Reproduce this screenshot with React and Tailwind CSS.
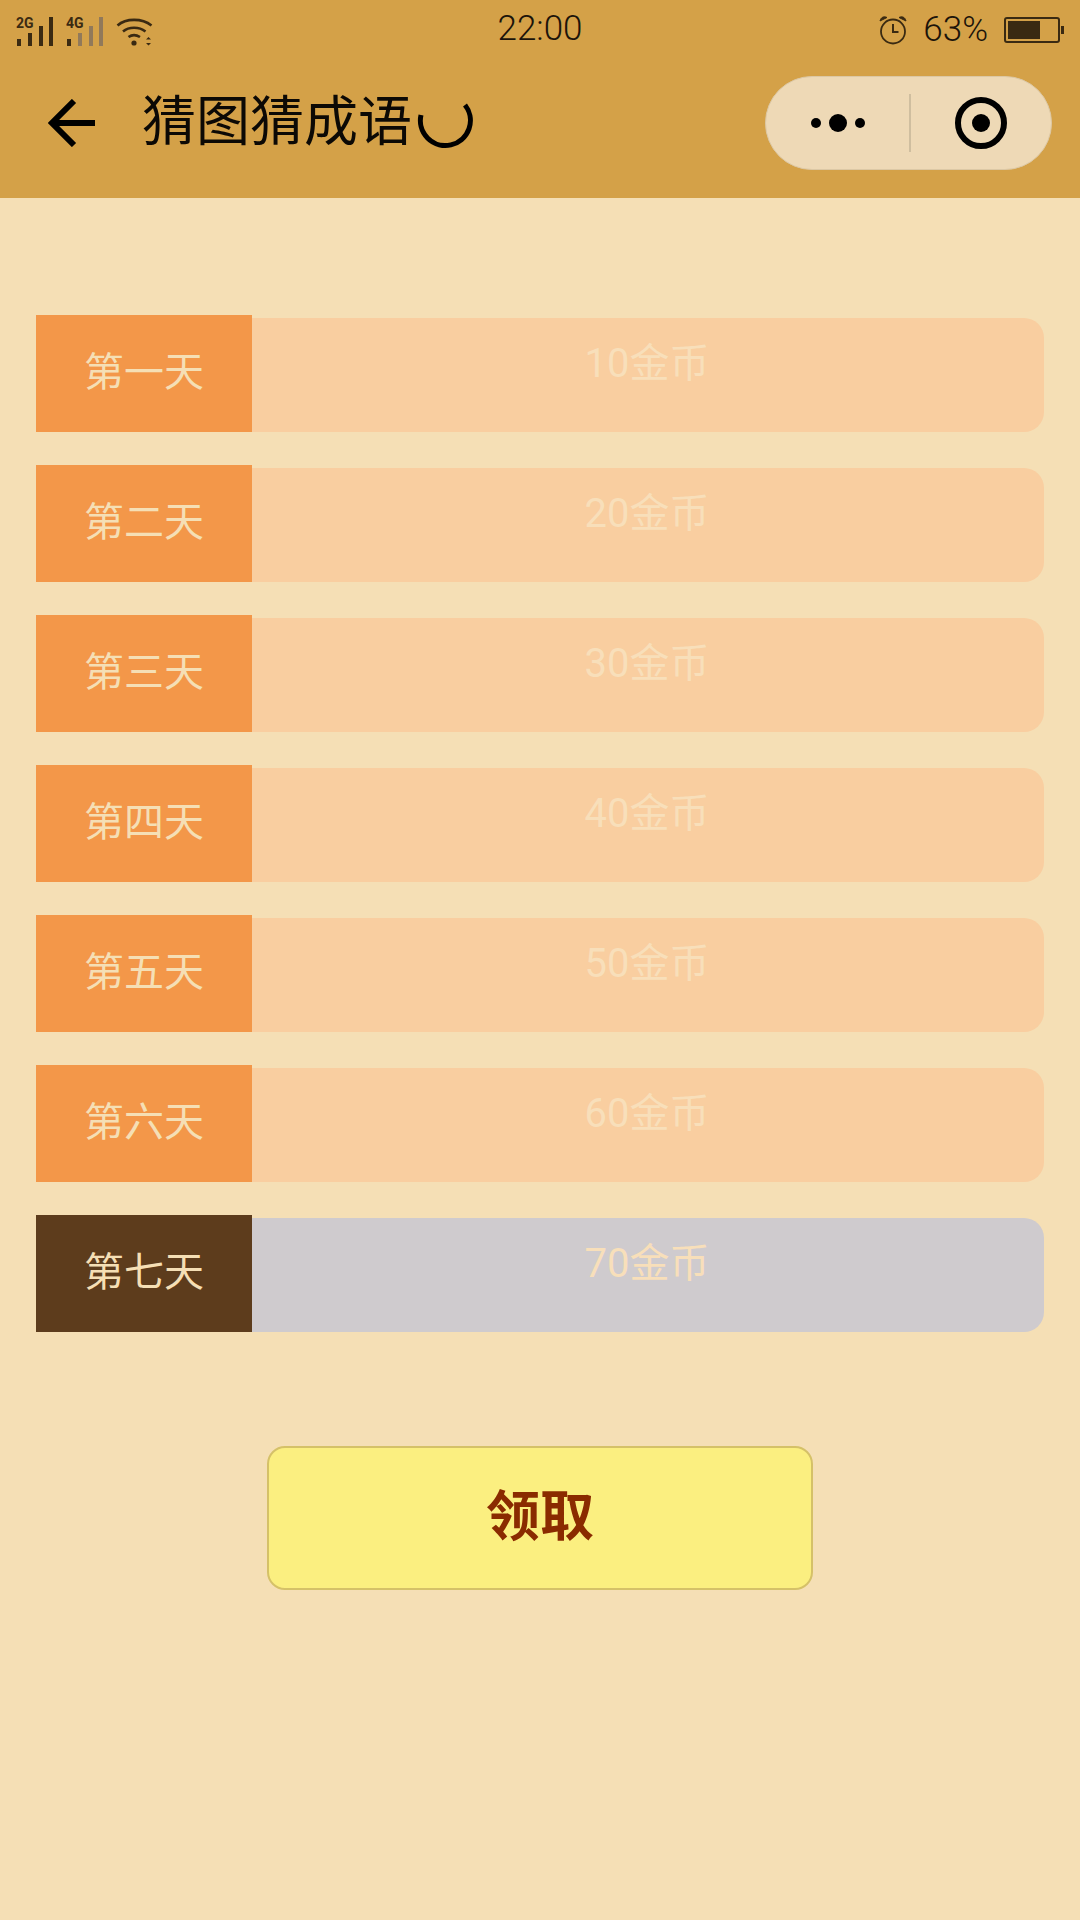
const cjk = { fontFamily: '"Roboto", "Noto Sans CJK SC", sans-serif' };

const rows = [
  ["第一天", "10金币"],
  ["第二天", "20金币"],
  ["第三天", "30金币"],
  ["第四天", "40金币"],
  ["第五天", "50金币"],
  ["第六天", "60金币"],
  ["第七天", "70金币"],
];

function Signal({ label, dim }) {
  return (
    <svg width="40" height="30" viewBox="0 0 40 30" className="block">
      <text x="0" y="11" fontSize="14" fontWeight="700" fill="#3a2a12" fontFamily="Roboto, sans-serif">{label}</text>
      <rect x="1" y="22" width="4" height="7" fill="#3a2a12" />
      <rect x="12" y="16" width="4" height="13" fill={dim ? "#91795a" : "#3a2a12"} />
      <rect x="23" y="9" width="4" height="20" fill={dim ? "#91795a" : "#3a2a12"} />
      <rect x="33" y="0" width="4" height="29" fill={dim ? "#91795a" : "#3a2a12"} />
    </svg>
  );
}

function Wifi() {
  return (
    <svg width="38" height="30" viewBox="0 0 38 30" className="block" fill="none" stroke="#3a2a12" strokeWidth="2.6">
      <path d="M1.5 8.5 C10 1 26 1 35.5 8.5" />
      <path d="M7 14.5 C13 9.5 23 9.5 29.5 14.5" />
      <path d="M12.5 20 C16 17.5 20 17.5 24 20" />
      <circle cx="18" cy="26" r="2.6" fill="#3a2a12" stroke="none" />
      <path d="M30 22.5 L32.5 20 L35 22.5 Z M30 26 L32.5 28.5 L35 26 Z" fill="#3a2a12" stroke="none" />
    </svg>
  );
}

function Alarm() {
  return (
    <svg width="28" height="30" viewBox="0 0 28 30" className="block" fill="none" stroke="#3a2a12" strokeWidth="1.8">
      <circle cx="14" cy="16.5" r="12" />
      <path d="M14 9 V17 H19.5" strokeWidth="2" />
      <path d="M1 6 C2 2 5 1 8 2.5 Z M27 6 C26 2 23 1 20 2.5 Z" fill="#3a2a12" strokeWidth="1" />
    </svg>
  );
}

function Battery() {
  return (
    <div className="flex items-center">
      <div className="w-[56px] h-[26px] border-[2px] border-[#3a2a12] rounded-[3px] p-[2px] flex">
        <div className="w-[32px] h-full bg-[#3a2a12]" />
      </div>
      <div className="w-[3px] h-[8px] bg-[#3a2a12] ml-[1px]" />
    </div>
  );
}

function Row({ day, coins, last }) {
  return (
    <div className="flex items-end h-[117px]">
      <div className={`w-[216px] h-[117px] flex items-center justify-center text-[40px] leading-none pb-[2px] ${last ? "bg-[#5d3c1c] text-[#f5dfb5]" : "bg-[#f39749] text-[#f5dfb5]"}`}>
        {day}
      </div>
      <div className={`flex-1 h-[114px] rounded-r-[20px] flex justify-center text-[40px] leading-[46px] pt-[23px] pr-[0px] text-[#f8dfba] ${last ? "bg-[#cfcbce]" : "bg-[#f9cea0]"}`}>
        <span className="-ml-[2px] -translate-x-[0px]">{coins}</span>
      </div>
    </div>
  );
}

export default function App() {
  return (
    <div className="w-[1080px] h-[1920px] bg-[#f5dfb5] overflow-hidden flex flex-col" style={cjk}>
      <header className="h-[198px] bg-[#d4a148] flex flex-col shrink-0 border-b-0">
        <div className="h-[60px] flex items-center relative px-[16px] text-[#1c140a]">
          <div className="flex items-center gap-[10px] pt-[3px]">
            <Signal label="2G" />
            <Signal label="4G" dim />
            <Wifi />
          </div>
          <div className="absolute left-0 right-0 top-[9px] text-center text-[35px] leading-[40px] font-light pl-[0px]">22:00</div>
          <div className="ml-auto flex items-center gap-[16px] pr-[0px] pt-[0px]">
            <Alarm />
            <span className="text-[35px] leading-[40px] font-light">63%</span>
            <Battery />
          </div>
        </div>
        <div className="h-[138px] flex items-center pl-[48px] pr-[28px] pb-[12px]">
          <svg width="48" height="48" viewBox="0 0 48 48" fill="none" stroke="#000" strokeWidth="6" className="block shrink-0">
            <path d="M47 24 H4" />
            <path d="M26 2 L4 24 L26 46" />
          </svg>
          <div className="ml-[46px] text-[54px] leading-none text-[#0c0905]">猜图猜成语</div>
          <svg width="56" height="56" viewBox="0 0 56 56" fill="none" stroke="#000" strokeWidth="5" className="block shrink-0 ml-[5px] mt-[4px]">
            <path d="M4 18 A25 25 0 1 0 48 8" />
          </svg>
          <div className="ml-auto w-[287px] h-[94px] rounded-full bg-[#eed9b6] border border-[#dcc8a5] flex items-center">
            <div className="w-[143px] h-full flex items-center justify-center gap-[8px] pl-[0px]">
              <div className="w-[10px] h-[10px] rounded-full bg-black" />
              <div className="w-[18px] h-[18px] rounded-full bg-black" />
              <div className="w-[10px] h-[10px] rounded-full bg-black" />
            </div>
            <div className="w-[2px] h-[58px] bg-[#cfbe9f]" />
            <div className="flex-1 flex items-center justify-center">
              <div className="w-[52px] h-[52px] rounded-full border-[6px] border-black flex items-center justify-center">
                <div className="w-[18px] h-[18px] rounded-full bg-black" />
              </div>
            </div>
          </div>
        </div>
      </header>
      <main className="flex-1 flex flex-col">
        <div className="pt-[117px] pl-[36px] pr-[36px] flex flex-col gap-[33px]">
          {rows.map(([d, c], i) => (
            <Row key={d} day={d} coins={c} last={i === 6} />
          ))}
        </div>
        <div className="mt-[114px] flex justify-center">
          <button className="w-[546px] h-[144px] rounded-[18px] bg-[#fbef80] border-[2px] border-[#d5c168] text-[#8a2b00] text-[54px] font-bold leading-none flex items-center justify-center">
            领取
          </button>
        </div>
      </main>
    </div>
  );
}
